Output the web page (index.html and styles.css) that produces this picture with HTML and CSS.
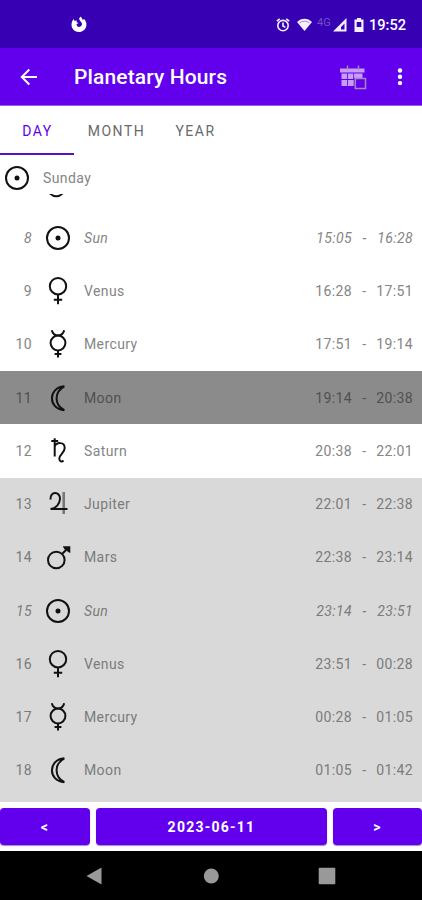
FILE: index.html
```html
<!DOCTYPE html>
<html lang="en">
<head>
<meta charset="utf-8">
<title>Planetary Hours</title>
<link rel="stylesheet" href="styles.css">
</head>
<body>
<svg class="defs" aria-hidden="true">
  <symbol id="sun" viewBox="0 0 28 28"><circle cx="14" cy="14" r="11"/><circle class="solid" cx="14" cy="14" r="2.5"/></symbol>
  <symbol id="venus" viewBox="0 0 28 28"><circle cx="14" cy="9.2" r="8.2"/><path d="M14 17.3V27.2M9.8 22.8H18.2"/></symbol>
  <symbol id="mercury" viewBox="0 0 28 28"><circle cx="14" cy="13" r="7.4"/><path d="M7.8 .3C8.600 3.500 10.700 5.500 14 5.500S19.400 3.500 20.200 .3M14 20.300V27.600M10.600 24H17.400"/></symbol>
  <symbol id="moon" viewBox="0 0 28 28"><path d="M20.300 2.300C3.800 3.500 3.800 25 20.300 26.200C10 20.500 10 8 20.300 2.300Z"/></symbol>
  <symbol id="saturn" viewBox="0 0 28 28"><path d="M7.300 3.900H14.200M10.700 1.300V19.500M10.700 9.500C12.500 5 20.700 4.500 20.700 11C20.700 16 15.300 17.500 15.300 21.500C15.300 24.800 18 25.200 19.500 23.500"/></symbol>
  <symbol id="jupiter" viewBox="0 0 28 28"><path class="stem" d="M19.700 2V24"/><path d="M6.500 9.500C5.800 1 16.300 1 16 9C15.700 14.500 11.500 18.500 6.500 19H23.500"/></symbol>
  <symbol id="mars" viewBox="0 0 28 28"><circle cx="12.300" cy="17" r="8.300"/><path d="M18.300 10.800L23 6"/><path class="solid" d="M18.700 3.200H26.300V10L24 9L22.500 7L20.500 6.200Z"/></symbol>
</svg>
<div class="screen">
  <header class="status">
    <svg class="firefox" viewBox="0 0 18 18"><path d="M9 2.500C10 1.600 10.200 1 10.300 .5C11.600 1.500 12.200 2.500 12.700 4L14.200 3C16 5.200 16.800 7.400 16.300 10C15.600 13.600 12.600 16 9 16C4.700 16 1.500 12.900 1.500 8.800C1.500 6.600 2.300 4.600 3.700 3L4.600 5L7 4.500L6.500 6.200L8.600 7L6.500 8.200C6.700 10 7.800 10.900 9.200 10.900C11.200 10.900 12.300 9.300 11.900 7.500C11.500 5.700 9.400 5 9 2.500Z"/></svg>
    <div class="status-right">
      <svg class="alarm" viewBox="0 0 14 14"><circle cx="7" cy="7.600" r="5.200"/><path d="M7 4.500V8L9.400 9.400M.8 3.200L3.700 .9M13.200 3.200L10.300 .9"/></svg>
      <svg class="wifi" viewBox="0 0 15 13"><path d="M0 4C4-.5 11-.5 15 4L7.500 13Z"/><path class="arc" d="M2.600 4.800Q7.500 1.500 12.400 4.800"/></svg>
      <span class="net">4G</span>
      <svg class="signal" viewBox="0 0 14 14"><path fill-rule="evenodd" d="M0 13.500L13.500 0V13.500ZM8 11.500H11.500V5.500L8 9Z"/></svg>
      <svg class="battery" viewBox="0 0 10 14"><path fill-rule="evenodd" d="M3 0H7V1.500H9.500V14H.5V1.500H3ZM2.700 4V9H7.300V4Z"/></svg>
      <span class="clock">19:52</span>
    </div>
  </header>
  <div class="appbar">
    <svg class="back" viewBox="0 0 18 18"><path d="M17 9H2M9.300 1.500L1.800 9L9.300 16.500"/></svg>
    <h1>Planetary Hours</h1>
    <svg class="calendar" viewBox="0 0 28 26"><path class="cal" d="M0 4.500H24.500V8.500H0ZM1.500 9.500H7V15H1.500ZM7.800 9.500H13.300V15H7.800ZM14.100 9.500H22.500V14H14.100ZM1.500 16H7V22H1.500ZM7.800 16H13.700V22H7.800Z"/><path class="rings" d="M7.500 1.500V6M18.500 1.500V6"/><path class="box" d="M15.300 14.500H25.500V24.500H15.300Z"/></svg>
    <svg class="more" viewBox="0 0 6 18"><circle cx="3" cy="2.500" r="2.200"/><circle cx="3" cy="8.800" r="2.200"/><circle cx="3" cy="15.100" r="2.200"/></svg>
  </div>
  <nav class="tabs"><span class="tab active">DAY</span><span class="tab month">MONTH</span><span class="tab">YEAR</span></nav>
  <main class="list">
    <div class="day"><svg class="glyph"><use href="#sun"/></svg><span>Sunday</span></div>
    <div class="clipped"><svg class="glyph"><use href="#mars"/></svg></div>
    <div class="row sunrow"><span class="num">8</span><svg class="glyph"><use href="#sun"/></svg><span class="name">Sun</span><span class="from">15:05</span><span class="dash">-</span><span class="to">16:28</span></div>
    <div class="row"><span class="num">9</span><svg class="glyph"><use href="#venus"/></svg><span class="name">Venus</span><span class="from">16:28</span><span class="dash">-</span><span class="to">17:51</span></div>
    <div class="row"><span class="num">10</span><svg class="glyph"><use href="#mercury"/></svg><span class="name">Mercury</span><span class="from">17:51</span><span class="dash">-</span><span class="to">19:14</span></div>
    <div class="row current"><span class="num">11</span><svg class="glyph"><use href="#moon"/></svg><span class="name">Moon</span><span class="from">19:14</span><span class="dash">-</span><span class="to">20:38</span></div>
    <div class="row"><span class="num">12</span><svg class="glyph"><use href="#saturn"/></svg><span class="name">Saturn</span><span class="from">20:38</span><span class="dash">-</span><span class="to">22:01</span></div>
    <div class="night">
      <div class="row"><span class="num">13</span><svg class="glyph"><use href="#jupiter"/></svg><span class="name">Jupiter</span><span class="from">22:01</span><span class="dash">-</span><span class="to">22:38</span></div>
      <div class="row"><span class="num">14</span><svg class="glyph"><use href="#mars"/></svg><span class="name">Mars</span><span class="from">22:38</span><span class="dash">-</span><span class="to">23:14</span></div>
      <div class="row sunrow"><span class="num">15</span><svg class="glyph"><use href="#sun"/></svg><span class="name">Sun</span><span class="from">23:14</span><span class="dash">-</span><span class="to">23:51</span></div>
      <div class="row"><span class="num">16</span><svg class="glyph"><use href="#venus"/></svg><span class="name">Venus</span><span class="from">23:51</span><span class="dash">-</span><span class="to">00:28</span></div>
      <div class="row"><span class="num">17</span><svg class="glyph"><use href="#mercury"/></svg><span class="name">Mercury</span><span class="from">00:28</span><span class="dash">-</span><span class="to">01:05</span></div>
      <div class="row"><span class="num">18</span><svg class="glyph"><use href="#moon"/></svg><span class="name">Moon</span><span class="from">01:05</span><span class="dash">-</span><span class="to">01:42</span></div>
    </div>
  </main>
  <div class="pager"><button>&lt;</button><button>2023-06-11</button><button>&gt;</button></div>
  <footer class="navbar">
    <svg viewBox="0 0 18 18"><path d="M.5 9L15.500 .5V17.500Z"/></svg>
    <svg viewBox="0 0 18 18"><circle cx="9.300" cy="9" r="7.500"/></svg>
    <svg viewBox="0 0 18 18"><rect x=".7" y=".7" width="16.600" height="16.600" rx="1"/></svg>
  </footer>
</div>
</body>
</html>
```
FILE: styles.css
```css
* { box-sizing: border-box; }
body { margin: 0; font-family: Roboto, sans-serif; }
.defs { position: absolute; width: 0; height: 0; }
.screen { width: 422px; height: 900px; display: flex; flex-direction: column; overflow: hidden; background: #fff; }
svg { display: block; flex: none; }

.status { height: 48px; flex: none; background: #3700b3; display: flex; align-items: center; justify-content: space-between; padding: 1px 17px 0 70px; color: #fff; }
.firefox { width: 18px; height: 18px; fill: #fff; }
.status-right { display: flex; align-items: center; }
.status-right svg { fill: #f4efff; }
.status-right .alarm { width: 14px; height: 14px; fill: none; stroke: #f4efff; stroke-width: 1.600; }
.wifi { width: 15px; height: 13px; margin-left: 7px; }
.status-right .wifi .arc { fill: none; stroke: #3700b3; stroke-width: .7; opacity: .6; }
.net { width: 14px; margin: -4px 2px 0 5px; font-size: 11px; color: #7650ca; }
.signal { width: 14px; height: 14px; }
.battery { width: 10px; height: 14px; margin: 0 5px 0 7px; }
.clock { width: 36px; font-size: 14.600px; font-weight: 500; white-space: nowrap; }

.appbar { height: 58px; flex: none; background: #6200ee; border-bottom: 1px solid #9b5cf4; display: flex; align-items: center; padding: 0 19px 0 20px; }
.back { width: 18px; height: 18px; fill: none; stroke: #fff; stroke-width: 2; }
h1 { margin: 1px auto 0 36px; font-size: 21px; font-weight: 500; color: #fff; letter-spacing: .13px; white-space: nowrap; }
.calendar { width: 28px; height: 26px; margin-right: 29px; }
.cal { fill: #c69df8; }
.rings { stroke: #a18ab8; stroke-width: 1.500; }
.box { fill: #6200ee; stroke: #a18ab8; stroke-width: 1.500; }
.more { width: 6px; height: 18px; fill: #fff; }

.tabs { height: 49px; flex: none; display: flex; }
.tab { width: 74px; padding-left: 1px; text-align: center; line-height: 50px; font-size: 14px; letter-spacing: 1.500px; color: #6a6a6a; }
.tab.month { width: 84px; }
.tab.active { color: #6200ee; border-bottom: 2px solid #5412c5; }

.list { height: 647px; flex: none; display: flex; flex-direction: column; font-size: 14px; letter-spacing: .4px; color: #858585; }
.day { height: 39px; flex: none; display: flex; align-items: center; gap: 12px; padding: 6px 0 0 3px; }
.glyph { width: 28px; height: 28px; fill: none; stroke: #111; stroke-width: 2; }
.solid { fill: #111; stroke: none; }
.stem { stroke: #777; stroke-width: 2.600; }
.clipped { height: 17.300px; flex: none; display: flex; align-items: flex-end; overflow: hidden; padding: 0 0 0 44px; }
.clipped .glyph { margin-bottom: 12.700px; }
.row { height: 53.250px; flex: none; display: grid; grid-template-columns: 32px 28px 1fr 40px 22px 39px; align-items: center; padding-right: 9px; }
.num { text-align: right; }
.row .glyph { margin-left: 12px; }
.name { padding-left: 24px; }
.from, .to { text-align: right; white-space: nowrap; }
.dash { padding-left: 3px; text-align: center; }
.row.sunrow { font-style: italic; }
.current { background: #8b8b8b; color: #505050; }
.night { flex: 1; background: #d9d9d9; color: #7b7b7b; }

.pager { height: 49px; flex: none; display: grid; grid-template-columns: 90px 231px 1fr; gap: 6px; padding: 6px 0; }
.pager button { border: 0; border-radius: 4px; background: #6200ee; box-shadow: 0 1px 1px #a387c8; color: #fff; font: 700 14px Roboto, sans-serif; letter-spacing: 1.250px; padding: 0; }
.navbar { flex: 1; background: #000; display: flex; justify-content: center; gap: 98px; padding-top: 16px; }
.navbar svg { width: 18px; height: 18px; fill: #999; }
```
